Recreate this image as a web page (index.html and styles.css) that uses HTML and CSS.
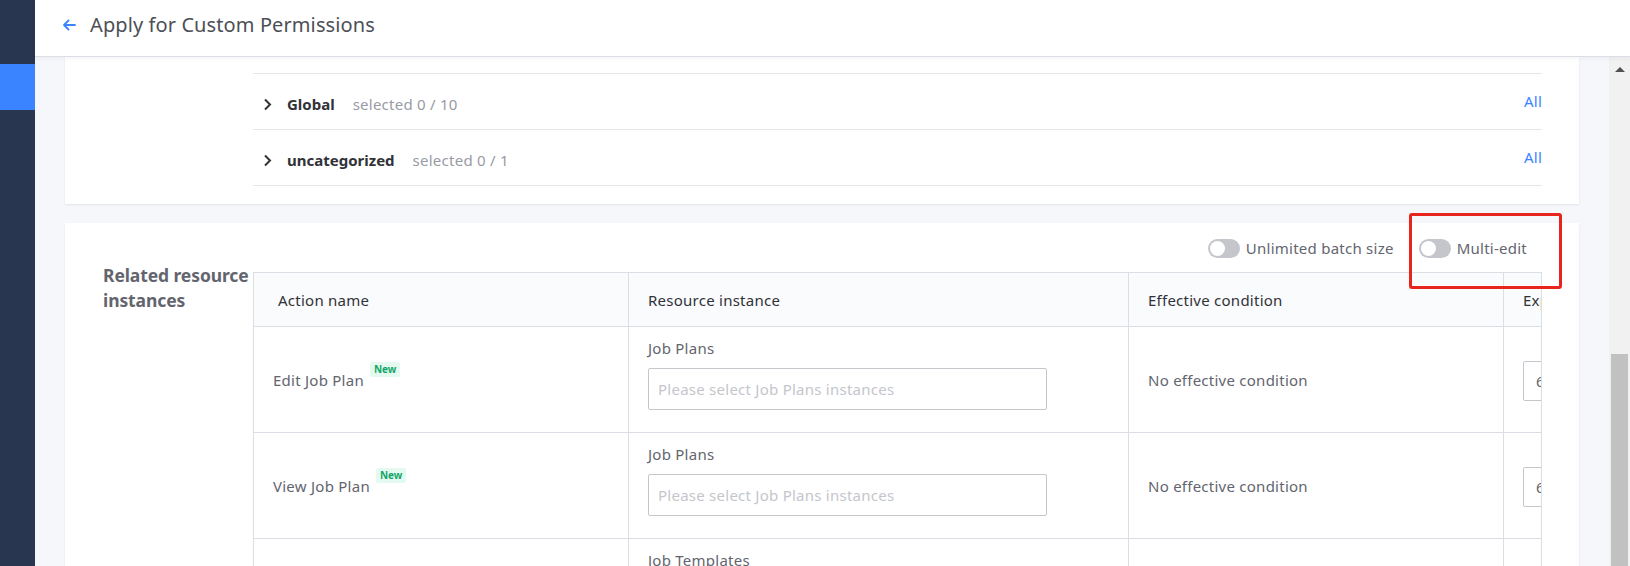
FILE: index.html
```html
<!DOCTYPE html>
<html lang="en">
<head>
<meta charset="utf-8">
<title>Apply for Custom Permissions</title>
<link rel="stylesheet" href="styles.css">
</head>
<body>
<div class="app">
  <aside class="sidebar">
    <div class="nav-active"></div>
  </aside>
  <div class="main">
    <header class="topbar">
      <svg class="back" width="14" height="12" viewBox="0 0 14 12" aria-hidden="true">
        <path d="M13 6H2M6.5 1.5L2 6l4.5 4.5" fill="none" stroke="#3a84ff" stroke-width="1.8" stroke-linecap="round" stroke-linejoin="round"/>
      </svg>
      <h1 class="title">Apply for Custom Permissions</h1>
    </header>
    <div class="body-row">
      <div class="content">
        <section class="card card-top">
          <div class="group group-prev"></div>
          <div class="group">
            <svg class="chev" width="9" height="13" viewBox="0 0 9 13" aria-hidden="true"><path d="M2 1.5l5 5-5 5" fill="none" stroke="#313238" stroke-width="2"/></svg>
            <span class="group-name">Global</span>
            <span class="group-sel">selected 0 / 10</span>
            <span class="group-all">All</span>
          </div>
          <div class="group">
            <svg class="chev" width="9" height="13" viewBox="0 0 9 13" aria-hidden="true"><path d="M2 1.5l5 5-5 5" fill="none" stroke="#313238" stroke-width="2"/></svg>
            <span class="group-name">uncategorized</span>
            <span class="group-sel">selected 0 / 1</span>
            <span class="group-all">All</span>
          </div>
        </section>

        <section class="card card-res">
          <div class="res-label">Related resource instances</div>
          <div class="res-main">
            <div class="switches">
              <div class="switch-item"><span class="switch"><span class="knob"></span></span><span>Unlimited batch size</span></div>
              <div class="switch-item"><span class="switch"><span class="knob"></span></span><span>Multi-edit</span></div>
            </div>
            <div class="table-wrap">
              <div class="grid">
                <div class="th th-first">Action name</div>
                <div class="th">Resource instance</div>
                <div class="th">Effective condition</div>
                <div class="th">Expiry period</div>

                <div class="td td-name"><span>Edit Job Plan</span><span class="tag">New</span></div>
                <div class="td td-res">
                  <div class="res-title">Job Plans</div>
                  <div class="select"><span class="ph">Please select Job Plans instances</span></div>
                </div>
                <div class="td td-cond">No effective condition</div>
                <div class="td td-exp"><div class="exp-input">6 months</div></div>

                <div class="td td-name"><span>View Job Plan</span><span class="tag">New</span></div>
                <div class="td td-res">
                  <div class="res-title">Job Plans</div>
                  <div class="select"><span class="ph">Please select Job Plans instances</span></div>
                </div>
                <div class="td td-cond">No effective condition</div>
                <div class="td td-exp"><div class="exp-input">6 months</div></div>

                <div class="td td-name"><span>Edit Job Template</span><span class="tag">New</span></div>
                <div class="td td-res">
                  <div class="res-title">Job Templates</div>
                  <div class="select"><span class="ph">Please select Job Templates instances</span></div>
                </div>
                <div class="td td-cond">No effective condition</div>
                <div class="td td-exp"><div class="exp-input">6 months</div></div>
              </div>
            </div>
          </div>
        </section>
      </div>
      <div class="scrollbar">
        <div class="sb-arrow"></div>
        <div class="sb-thumb"></div>
      </div>
    </div>
  </div>
</div>
<div class="annot"></div>
</body>
</html>
```

FILE: styles.css
```css
html, body {
  margin: 0;
  padding: 0;
  width: 1630px;
  height: 566px;
  overflow: hidden;
  background: #f5f7fa;
  font-family: "Noto Sans", "Open Sans", sans-serif;
  font-size: 15px;
  letter-spacing: 0.25px;
  color: #63656e;
}

.app {
  display: flex;
  width: 1630px;
  height: 566px;
}

.sidebar {
  width: 35px;
  flex: none;
  background: #283650;
  padding-top: 64px;
  box-sizing: border-box;
}

.nav-active {
  height: 46px;
  background: #3a84ff;
}

.main {
  flex: 1;
  display: flex;
  flex-direction: column;
  min-width: 0;
}

.topbar {
  height: 57px;
  flex: none;
  box-sizing: border-box;
  background: #fff;
  border-bottom: 1px solid #dcdee5;
  box-shadow: 0 2px 4px rgba(0, 0, 0, 0.04);
  display: flex;
  align-items: center;
  padding: 0 0 7px 27px;
  position: relative;
  z-index: 2;
}

.back {
  flex: none;
}

.title {
  margin: 0 0 0 14px;
  font-size: 20px;
  font-weight: 400;
  letter-spacing: 0.1px;
  color: #4d4f56;
  line-height: 28px;
}

.body-row {
  flex: 1;
  display: flex;
  min-height: 0;
}

.content {
  flex: 1;
  overflow: hidden;
  padding: 0 30px;
}

.card {
  background: #fff;
  box-shadow: 0 1px 2px rgba(0, 0, 0, 0.08);
}

.card-top {
  padding: 0 37px 18px 188px;
}

.group {
  height: 56px;
  box-sizing: border-box;
  border-bottom: 1px solid #e4e6ea;
  display: flex;
  align-items: center;
  padding: 5px 0 0 10px;
}

.group-prev {
  height: 17px;
  padding: 0;
}

.chev {
  flex: none;
  margin-right: 15px;
  margin-top: 1px;
}

.group-name {
  font-weight: 700;
  color: #313238;
  letter-spacing: 0;
  margin-right: 18px;
}

.group-sel {
  color: #979ba5;
}

.group-all {
  margin-left: auto;
  color: #3a84ff;
  margin-bottom: 6px;
}

.card-res {
  margin-top: 19px;
  padding: 12px 37px 0 0;
  display: flex;
  align-items: flex-start;
}

.res-label {
  width: 188px;
  flex: none;
  box-sizing: border-box;
  padding: 0 0 0 38px;
  margin-top: 28px;
  font-size: 17.5px;
  font-weight: 700;
  letter-spacing: -0.1px;
  line-height: 25px;
  color: #63656e;
}

.res-main {
  flex: 1;
  min-width: 0;
}

.switches {
  height: 26px;
  display: flex;
  justify-content: flex-end;
  align-items: center;
  gap: 25px;
  padding-right: 15px;
  margin-bottom: 11px;
}

.switch-item {
  display: flex;
  align-items: center;
  gap: 6px;
  color: #63656e;
}

.switch {
  width: 32px;
  height: 19px;
  border-radius: 10px;
  background: #c4c6cc;
  position: relative;
  flex: none;
}

.knob {
  position: absolute;
  left: 2px;
  top: 2px;
  width: 15px;
  height: 15px;
  border-radius: 50%;
  background: #fff;
}

.table-wrap {
  border: 1px solid #dcdee5;
  overflow: hidden;
}

.grid {
  display: grid;
  grid-template-columns: 375px 500px 375px 300px;
  width: 1550px;
}

.th,
.td {
  box-sizing: border-box;
  border-right: 1px solid #dcdee5;
  border-bottom: 1px solid #dcdee5;
  padding-left: 19px;
}

.th {
  height: 54px;
  background: #fafbfd;
  display: flex;
  align-items: center;
  color: #313238;
}

.th-first {
  padding-left: 24px;
}

.td {
  height: 106px;
  background: #fff;
}

.td-name {
  display: flex;
  align-items: center;
  color: #63656e;
}

.tag {
  position: relative;
  top: -10px;
  margin-left: 6px;
  padding: 0 4px;
  height: 15px;
  line-height: 15px;
  border-radius: 2px;
  background: #e4faf0;
  color: #14a568;
  font-size: 10px;
  font-weight: 700;
  letter-spacing: 0;
}

.td-res {
  padding-top: 11px;
  padding-right: 20px;
}

.res-title {
  line-height: 20px;
  color: #63656e;
}

.select {
  margin-top: 10px;
  width: 399px;
  height: 42px;
  box-sizing: border-box;
  border: 1px solid #c4c6cc;
  border-radius: 2px;
  display: flex;
  align-items: center;
  padding-left: 9px;
}

.ph {
  color: #c4c6cc;
}

.td-cond {
  display: flex;
  align-items: center;
}

.td-exp {
  display: flex;
  align-items: center;
  padding-top: 2px;
}

.exp-input {
  width: 200px;
  height: 40px;
  box-sizing: border-box;
  border: 1px solid #c4c6cc;
  border-radius: 2px;
  display: flex;
  align-items: center;
  padding-left: 12px;
  color: #63656e;
}

.scrollbar {
  width: 21px;
  flex: none;
  background: #f1f1f1;
  display: flex;
  flex-direction: column;
  align-items: center;
}

.sb-arrow {
  margin-top: 10px;
  width: 0;
  height: 0;
  border-left: 5px solid transparent;
  border-right: 5px solid transparent;
  border-bottom: 5px solid #505050;
}

.sb-thumb {
  margin-top: 282px;
  width: 17px;
  flex: 1;
  background: #c1c1c1;
}

.annot {
  position: absolute;
  left: 1409px;
  top: 213px;
  width: 153px;
  height: 76px;
  box-sizing: border-box;
  border: 3px solid #e8251d;
  border-radius: 3px;
}
```
